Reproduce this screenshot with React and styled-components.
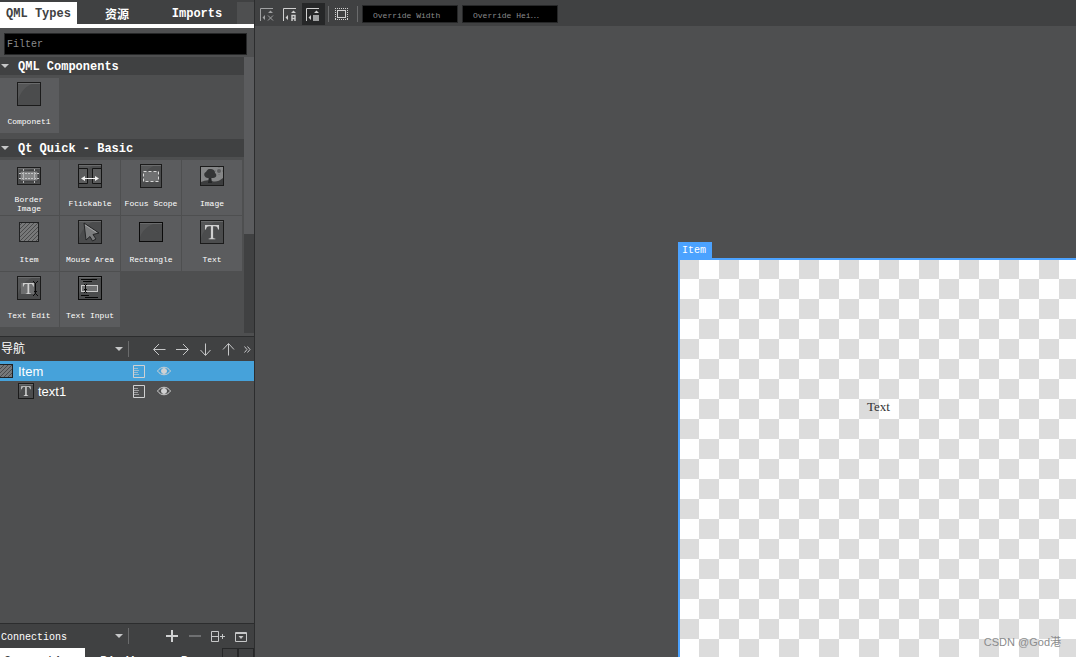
import React from "react";
import styled, {createGlobalStyle} from "styled-components";

const mono = `"Liberation Mono", "Noto Sans CJK SC", monospace`;
const sans = `"Liberation Sans", "Noto Sans CJK SC", sans-serif`;

const components = [
    {name: "Componet1", icon: "component"},
];

const basics = [
    {name: "Border Image", icon: "border"},
    {name: "Flickable", icon: "flickable"},
    {name: "Focus Scope", icon: "focus"},
    {name: "Image", icon: "image"},
    {name: "Item", icon: "item"},
    {name: "Mouse Area", icon: "mouse"},
    {name: "Rectangle", icon: "rectangle"},
    {name: "Text", icon: "text"},
    {name: "Text Edit", icon: "textEdit"},
    {name: "Text Input", icon: "textInput"},
];

const letterT = "M5 5H19V9.500H18C17.600 7 17 6.300 14.800 6.300H13.100V17C13.100 18.200 13.500 18.500 15.300 18.600V19.300H8.700V18.600C10.500 18.500 10.900 18.200 10.900 17V6.300H9.200C7 6.300 6.400 7 6 9.500H5Z";

const Frame = ({x = 0, y = 0, w = 24, h = 24, stroke = "#1b1b1b"}) => (
    <>
        <rect x={x} y={y} width={w} height={h} fill="#4b4c4d"/>
        <path d={`M${x} ${y}H${x + w - 2}Q${x + 3} ${y + 3} ${x} ${y + h - 1}Z`} fill="#555657"/>
        <path d={`M${x + 1} ${y + 1.5}H${x + w - 1}`} stroke="#6a6b6c"/>
        <rect x={x + 0.5} y={y + 0.5} width={w - 1} height={h - 1} fill="none" stroke={stroke}/>
    </>
);

const Hatch = ({x, y, w, h}) => (
    <svg x={x} y={y} width={w} height={h} viewBox={`0 0 ${w} ${h}`}>
        <rect width={w} height={h} fill="#777879"/>
        <path
            d="M-1 5L5 -1M-1 9L9 -1M-1 13L13 -1M-1 17L17 -1M-1 21L21 -1M3 21L21 3M7 21L21 7M11 21L21 11M15 21L21 15"
            stroke="#4a4b4c"
        />
        <rect x="0.5" y="0.5" width={w - 1} height={h - 1} fill="none" stroke="#202122"/>
    </svg>
);

const drawings = {
    component: <Frame/>,
    border: (
        <>
            <Frame y={3} h={18}/>
            <rect x="3" y="7" width="18" height="10" rx="1" fill="#858687" stroke="#3c3d3e"/>
            <path d="M2 9.500H22M2 14.500H22" stroke="#c4c5c6" strokeDasharray="2 1"/>
            <path d="M6.500 5V7M6.500 8V16M6.500 17V19M17.500 5V7M17.500 8V16M17.500 17V19" stroke="#b4b5b6"/>
        </>
    ),
    flickable: (
        <>
            <Frame/>
            <path d="M0.500 4.500H9.500V19.500H0.500ZM23.500 4.500H14.500V19.500H23.500Z" fill="#5b5c5d" stroke="#151515"/>
            <path d="M5 14.500H19" stroke="#f2f2f2"/>
            <path d="M3 14.500L7 12V17ZM21 14.500L17 12V17Z" fill="#f2f2f2"/>
        </>
    ),
    focus: (
        <>
            <Frame x={1} w={22}/>
            <rect x="4.500" y="7.500" width="15" height="10" fill="#6f7071" stroke="#d8d8d8" strokeDasharray="3 2"/>
        </>
    ),
    image: (
        <>
            <rect y="2" width="24" height="20" fill="#858687"/>
            <path d="M1 18Q7 15 12 17T23 14V21H1Z" fill="#3c3d3e"/>
            <path d="M9 12H11L12 19H8Z" fill="#262728"/>
            <path d="M10 5C7 5 7 7 6 8C3 9 4 14 8 14H13C17 14 17 10 15 9C15 6 13 5 10 5Z" fill="#343536"/>
            <circle cx="19" cy="7" r="2" fill="#5a5b5c"/>
            <path d="M19 3V4M19 10V11M15 7H16M22 7H23" stroke="#6b6c6d"/>
            <rect x="0.500" y="2.500" width="23" height="19" fill="none" stroke="#1b1b1b"/>
        </>
    ),
    item: <Hatch x={2} y={2} w={20} h={20}/>,
    mouse: (
        <>
            <Frame/>
            <path d="M6 3L21 13L15 14.500L18 19L14.500 21L12 16.500L8 20Z" fill="#7b7c7d" stroke="#242526"/>
            <path d="M7 5L18.500 12.500" stroke="#a5a6a7"/>
        </>
    ),
    rectangle: <Frame y={2} h={20} stroke="#0b0b0b"/>,
    text: (
        <>
            <Frame/>
            <path d={letterT} fill="#cfcfcf"/>
        </>
    ),
    textEdit: (
        <>
            <Frame/>
            <rect x="4" y="7" width="13" height="11" fill="#6e6f70"/>
            <path d={letterT} fill="#cfcfcf" transform="translate(2 3) scale(.78)"/>
            <path d="M16 5L18.500 7.500L21 5M18.500 7V18M16 20L18.500 17.500L21 20M17 15.500H20" fill="none" stroke="#0a0a0a"/>
        </>
    ),
    textInput: (
        <>
            <Frame stroke="#0b0b0b"/>
            <path d="M3 3.500H19M5 5.500H14M3 19.500H11M7 21.500H20" stroke="#060606"/>
            <rect x="3.500" y="9.500" width="16" height="6" fill="#707172" stroke="#c8c8c8"/>
            <path d="M6 8.500H7M8 8.500H9M7.500 9V16M6 16.500H7M8 16.500H9M6 13.500H9" stroke="#060606"/>
        </>
    ),
};

const strokes = {
    left: "M13.500 7.500H2M7 2L1.500 7.500L7 13",
    right: "M1 7.500H13M8 2L13.500 7.500L8 13",
    down: "M7.500 1.500V13M2.500 8L7.500 13.500L12.500 8",
    up: "M7.500 13.500V2M2 7.500L7.500 1.500L13 7.500",
};

const Arrow = ({dir}) => (
    <svg width="15" height="15" fill="none" stroke="#c6c7c8">
        <path d={strokes[dir]}/>
    </svg>
);

const AnchorIcon = ({kind}) => {
    const color = kind === "reset" ? "#a0a1a2" : "#d0d0d0";
    return (
        <svg width="15" height="15" fill="none" stroke={color}>
            <path d="M0.500 14V1.500H13"/>
            <path d="M8 6H13L10.500 3.500ZM5 8V13L2.500 10.500Z" fill={color} stroke="none"/>
            {kind === "reset" && <path d="M8 8.500L13 13.500M13 8.500L8 13.500"/>}
            {kind === "auto" && <path d="M9 14V8.500H12V14M9 11.500H12" strokeWidth="1.400"/>}
            {kind === "fill" && <rect x="7" y="8" width="6" height="6" fill="#9fa0a1" stroke="none"/>}
        </svg>
    )
};

const ExportIcon = () => (
    <svg width="12" height="13" fill="none" stroke="#d0d1d2">
        <path d="M0.500 0.500H11.500V12.500H0.500Z"/>
        <path d="M1 3.500H5M1 5.500H6M1 7.500H5M1 9.500H6" opacity=".6"/>
    </svg>
);

const EyeIcon = () => (
    <svg width="14" height="10" fill="none" stroke="#d0d1d2">
        <path d="M0.500 5C4 0 10 0 13.500 5C10 10 4 10 0.500 5Z"/>
        <circle cx="7" cy="5" r="2.500" fill="#d0d1d2"/>
    </svg>
);

function Section({title, items}) {
    return (
        <>
            <SectionHeader>
                <Triangle/>
                <span>{title}</span>
            </SectionHeader>
            <TypeGrid>
                {items.map(item => (
                    <TypeCell key={item.name}>
                        <svg width="24" height="24">{drawings[item.icon]}</svg>
                        <span>{item.name}</span>
                    </TypeCell>
                ))}
            </TypeGrid>
        </>
    )
}

function DockSelect({label, font}) {
    return (
        <SelectBox>
            <select aria-label="Pane" className={font}>
                <option>{label}</option>
            </select>
            <Triangle/>
        </SelectBox>
    )
}

function Library() {
    return (
        <LibraryPane>
            <Tabs>
                <Tab $active>QML Types</Tab>
                <Tab>资源</Tab>
                <Tab>Imports</Tab>
                <TabRest/>
            </Tabs>
            <FilterRow>
                <FilterInput aria-label="Filter" placeholder="Filter"/>
            </FilterRow>
            <TypesArea>
                <TypesList>
                    <Section title="QML Components" items={components}/>
                    <Section title="Qt Quick - Basic" items={basics}/>
                </TypesList>
                <ScrollTrack>
                    <ScrollThumb/>
                </ScrollTrack>
            </TypesArea>
        </LibraryPane>
    )
}

function Navigator() {
    return (
        <NavigatorPane>
            <DockBar>
                <DockSelect label="导航" font="sans"/>
                <NavTools>
                    <IconButton aria-label="Left"><Arrow dir="left"/></IconButton>
                    <IconButton aria-label="Right"><Arrow dir="right"/></IconButton>
                    <IconButton aria-label="Down"><Arrow dir="down"/></IconButton>
                    <IconButton aria-label="Up"><Arrow dir="up"/></IconButton>
                    <More aria-label="More">
                        <svg width="7" height="7" fill="none" stroke="#c6c7c8">
                            <path d="M0.500 0.500L3 3.500L0.500 6.500M3.500 0.500L6 3.500L3.500 6.500"/>
                        </svg>
                    </More>
                </NavTools>
            </DockBar>
            <TreeRow $selected>
                <TreeName>
                    <svg width="14" height="14"><Hatch x={-3} y={0} w={16} h={14}/></svg>
                    Item
                </TreeName>
                <ExportIcon/>
                <EyeIcon/>
            </TreeRow>
            <TreeRow>
                <TreeName $child>
                    <svg width="16" height="16" viewBox="0 0 16 16">
                        <Frame w={16} h={16}/>
                        <path d={letterT} fill="#d4d4d4" transform="translate(-.2 -.2) scale(.68)"/>
                    </svg>
                    text1
                </TreeName>
                <ExportIcon/>
                <EyeIcon/>
            </TreeRow>
        </NavigatorPane>
    )
}

function Connections() {
    return (
        <ConnectionsPane>
            <DockBar>
                <DockSelect label="Connections" font="mono"/>
                <DockTools>
                    <IconButton aria-label="Add">
                        <svg width="15" height="15" stroke="#d0d1d2" strokeWidth="2"><path d="M2 7H14M8 1V13"/></svg>
                    </IconButton>
                    <IconButton aria-label="Remove">
                        <svg width="15" height="15" stroke="#6f7072" strokeWidth="2"><path d="M2 7H14"/></svg>
                    </IconButton>
                    <IconButton aria-label="Split">
                        <svg width="15" height="15" fill="none" stroke="#c6c7c8">
                            <path d="M1.500 2.500H8.500V12.500H1.500ZM1.500 7.500H8.500M10 7.500H15M12.500 5V10"/>
                        </svg>
                    </IconButton>
                    <IconButton aria-label="Close">
                        <svg width="15" height="15" fill="none" stroke="#c6c7c8">
                            <path d="M2.500 3.500H13.500V12.500H2.500ZM2 4.500H14"/>
                            <path d="M5.500 7H10.500L8 10Z" fill="#c6c7c8" stroke="none"/>
                        </svg>
                    </IconButton>
                </DockTools>
            </DockBar>
            <BottomTabs>
                <BottomTab $active>Connections</BottomTab>
                <BottomTab>Bindings</BottomTab>
                <BottomTab>Properties</BottomTab>
                <TabScroll>
                    <button aria-label="Previous tabs"><svg width="5" height="8"><path d="M5 0V8L0 4Z" fill="#5c5d5e"/></svg></button>
                    <button aria-label="Next tabs"><svg width="5" height="8"><path d="M0 0V8L5 4Z" fill="#0c0c0c"/></svg></button>
                </TabScroll>
            </BottomTabs>
        </ConnectionsPane>
    )
}

function FormEditor() {
    return (
        <Editor>
            <EditorBar>
                <ToolButton aria-label="No snapping"><AnchorIcon kind="reset"/></ToolButton>
                <ToolButton aria-label="Snap with anchors"><AnchorIcon kind="auto"/></ToolButton>
                <ToolButton aria-label="Snap without anchors" $pressed><AnchorIcon kind="fill"/></ToolButton>
                <Divider/>
                <ToolButton aria-label="Show bounding rectangles">
                    <svg width="15" height="15" fill="none" stroke="#d0d0d0">
                        <path d="M0 1.500H13M0 12.500H13M0.500 3V12M12.500 3V12" strokeDasharray="1 1"/>
                        <rect x="2.500" y="3.500" width="8" height="7"/>
                    </svg>
                </ToolButton>
                <Divider/>
                <SizeInput aria-label="Override Width" placeholder="Override Width"/>
                <SizeInput aria-label="Override Height" placeholder="Override Hei⋯"/>
            </EditorBar>
            <Stage>
                <RootItem>
                    <ItemTag>Item</ItemTag>
                    <CanvasText>Text</CanvasText>
                </RootItem>
                <Watermark>CSDN @God港</Watermark>
            </Stage>
        </Editor>
    )
}

export default function App() {
    return (
        <>
            <GlobalStyle/>
            <Shell>
                <Sidebar>
                    <Library/>
                    <Navigator/>
                    <Connections/>
                </Sidebar>
                <FormEditor/>
            </Shell>
        </>
    )
}

const GlobalStyle = createGlobalStyle`
  *{
    box-sizing: border-box;
  }
  body{
    margin: 0;
    background: #4e4f50;
    overflow: hidden;
  }
  button, input, select{
    margin: 0;
    padding: 0;
    border: 0;
    border-radius: 0;
    background: none;
    color: inherit;
    font: inherit;
  }
  svg{
    display: block;
    flex: none;
  }
`;

const Shell = styled.div`
  display: flex;
  height: 100vh;
  color: #ffffff;
  font: 10px ${mono};
`;

const Sidebar = styled.aside`
  display: flex;
  flex-direction: column;
  width: 255px;
  flex: none;
  border-right: 1px solid #2c2d2e;
  background: #4e4f50;
`;

const LibraryPane = styled.section`
  flex: none;
  border-bottom: 1px solid #2c2d2e;
  padding-bottom: 3px;
`;

const Tabs = styled.div`
  display: flex;
  height: 28px;
  padding-top: 2px;
  background: #404142;
  border-bottom: 4px solid #ffffff;
`;

const Tab = styled.button`
  width: ${props => props.$active ? 77 : 80}px;
  flex: none;
  padding-top: 2px;
  font: bold 12px ${mono};
  white-space: nowrap;
  color: ${props => props.$active ? "#404142" : "#ffffff"};
  background: ${props => props.$active ? "#ffffff" : "#404142"};
`;

const TabRest = styled.div`
  flex: 1;
  background: #4e4f50;
`;

const FilterRow = styled.div`
  padding: 5px 7px 2px 4px;
`;

const FilterInput = styled.input`
  display: block;
  width: 100%;
  height: 22px;
  padding: 1px 2px 0;
  background: #000000;
  border: 1px solid #262728;
  &::placeholder{
    color: #8a8b8c;
  }
`;

const TypesArea = styled.div`
  display: flex;
`;

const TypesList = styled.div`
  flex: 1;
  overflow: hidden;
`;

const SectionHeader = styled.h2`
  display: flex;
  align-items: center;
  gap: 9px;
  height: 18px;
  margin: 0;
  padding-left: 1px;
  background: #404142;
  font: bold 12px ${mono};
  span{
    padding-top: 2px;
  }
`;

const Triangle = styled.i`
  border: 4px solid transparent;
  border-top-color: #c6c7c8;
  border-bottom: 0;
`;

const TypeGrid = styled.div`
  display: grid;
  grid-template-columns: repeat(4, 60px);
  grid-auto-rows: 55px;
  gap: 1px;
  margin-left: -1px;
  padding: 3px 0 6px;
`;

const TypeCell = styled.div`
  display: flex;
  flex-direction: column;
  align-items: center;
  padding: 4px 2px 0;
  background: #5b5c5e;
  span{
    display: flex;
    align-items: center;
    flex: 1;
    padding-top: 4px;
    text-align: center;
    font-size: 8px;
    line-height: 9px;
  }
`;

const ScrollTrack = styled.div`
  width: 10px;
  background: #404142;
`;

const ScrollThumb = styled.div`
  height: 64%;
  background: #5b5c5e;
`;

const NavigatorPane = styled.section`
  flex: 1;
  min-height: 0;
`;

const DockBar = styled.div`
  display: flex;
  align-items: center;
  height: 24px;
  background: #404142;
`;

const SelectBox = styled.div`
  display: flex;
  flex: none;
  align-items: center;
  width: 129px;
  height: 16px;
  padding-right: 5px;
  border-right: 1px solid #6a6b6c;
  select{
    flex: 1;
    min-width: 0;
    padding-left: 1px;
    appearance: none;
    outline: 0;
  }
  .sans{
    font: 12px ${sans};
  }
  .mono{
    padding-top: 2px;
  }
`;

const IconButton = styled.button`
  display: flex;
  flex: none;
  align-items: center;
  justify-content: center;
  width: 23px;
  height: 22px;
`;

const NavTools = styled.div`
  display: flex;
  flex: 1;
  padding-left: 19px;
`;

const DockTools = styled(NavTools)`
  padding-left: 31px;
`;

const More = styled(IconButton)`
  width: 14px;
`;

const TreeRow = styled.div`
  display: grid;
  grid-template-columns: 133px 24px 1fr;
  align-items: center;
  height: 20px;
  background: ${props => props.$selected ? "#46a2da" : "transparent"};
`;

const TreeName = styled.div`
  display: flex;
  align-items: center;
  gap: 4px;
  padding-left: ${props => props.$child ? 18 : 0}px;
  font: 13px ${sans};
`;

const ConnectionsPane = styled.section`
  height: 34px;
  flex: none;
  overflow: hidden;
  border-top: 1px solid #2c2d2e;
`;

const BottomTabs = styled.div`
  display: flex;
  height: 26px;
  background: #404142;
`;

const BottomTab = styled.button`
  flex: none;
  width: ${props => props.$active ? 85 : 80}px;
  padding: 2px 0 0 ${props => props.$active ? 2 : 8}px;
  font: bold 12px ${mono};
  color: ${props => props.$active ? "#404142" : "#ffffff"};
  background: ${props => props.$active ? "#ffffff" : "transparent"};
  &:nth-child(3){
    flex: 1;
    min-width: 0;
    padding-left: 16px;
    overflow: hidden;
    text-align: left;
  }
`;

const TabScroll = styled.div`
  display: flex;
  flex: none;
  button{
    display: flex;
    align-items: center;
    justify-content: center;
    width: 16px;
    background: #404142;
    border: 1px solid #262728;
  }
`;

const Editor = styled.main`
  display: flex;
  flex: 1;
  flex-direction: column;
  min-width: 0;
`;

const EditorBar = styled.div`
  display: flex;
  align-items: center;
  height: 26px;
  padding: 2px 0 0 1px;
  background: #404142;
`;

const ToolButton = styled(IconButton)`
  background: ${props => props.$pressed ? "#262728" : "transparent"};
`;

const Divider = styled.span`
  width: 1px;
  height: 16px;
  margin: 0 2px 0 3px;
  background: #6a6b6c;
`;

const SizeInput = styled.input`
  width: 96px;
  height: 18px;
  margin: 0 2px;
  padding: 2px 0 0 10px;
  background: #000000;
  border: 1px solid #262728;
  font-size: 8px;
  &::placeholder{
    color: #8a8b8c;
  }
`;

const Stage = styled.div`
  position: relative;
  flex: 1;
  overflow: hidden;
  background: #4e4f50;
`;

const RootItem = styled.div`
  position: absolute;
  left: 423px;
  top: 232px;
  width: 640px;
  height: 480px;
  border: 2px solid #4ba2ff;
  background: repeating-conic-gradient(#ffffff 0 25%, #dcdcdc 0 50%) -1px -1px / 40px 40px;
`;

const ItemTag = styled.span`
  position: absolute;
  left: -2px;
  top: -18px;
  padding: 1px 6px 0 4px;
  background: #4ba2ff;
  line-height: 16px;
`;

const CanvasText = styled.span`
  position: absolute;
  left: 187px;
  top: 139px;
  color: #333333;
  font: 13px "Liberation Serif", serif;
`;

const Watermark = styled.span`
  position: absolute;
  right: 15px;
  bottom: 8px;
  color: #8a8b8c;
  font: 11px ${sans};
`;
